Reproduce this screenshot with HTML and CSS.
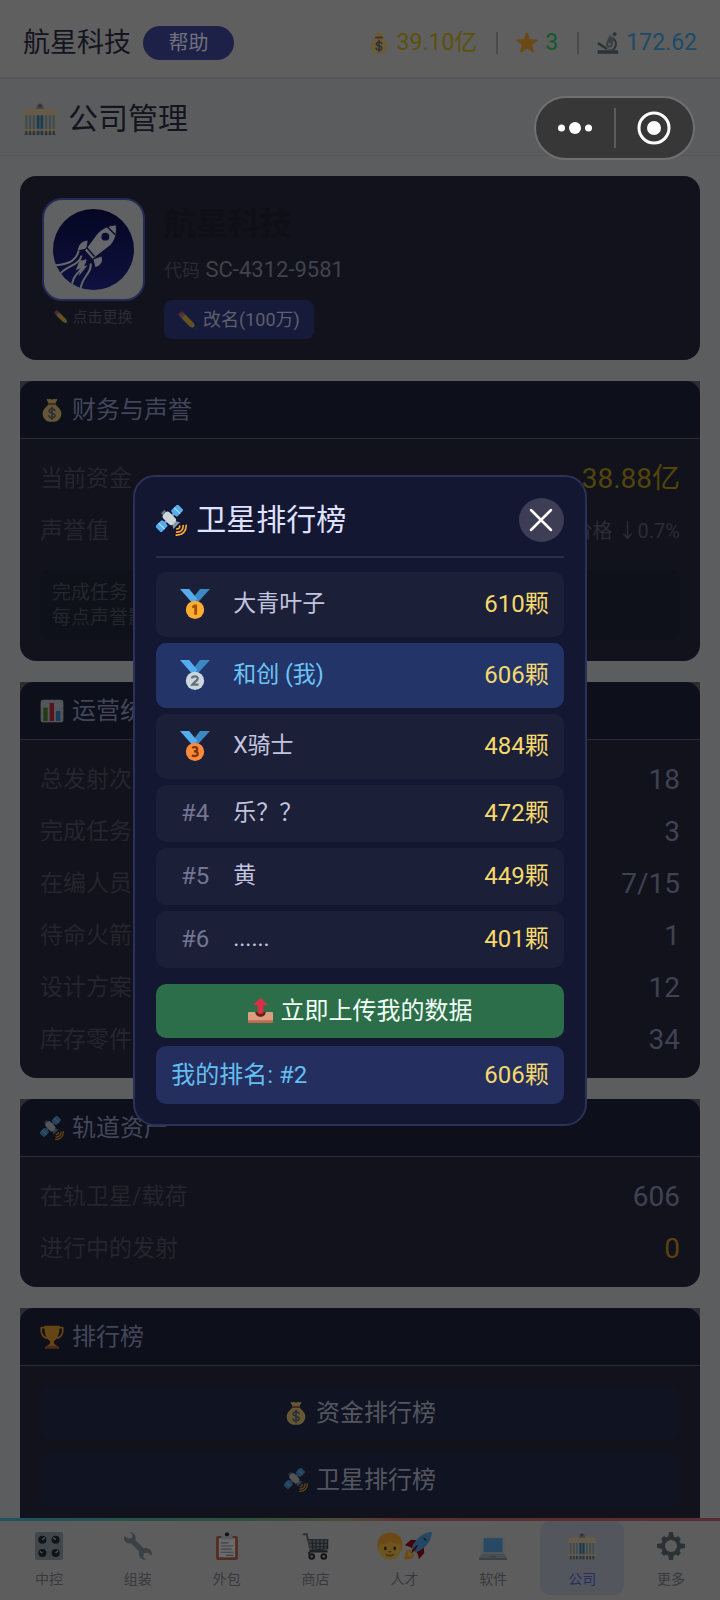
FILE: index.html
```html
<!DOCTYPE html>
<html lang="zh-CN">
<head>
<meta charset="utf-8">
<meta name="viewport" content="width=device-width, initial-scale=1">
<title>公司管理</title>
<link rel="stylesheet" href="styles.css">
</head>
<body>
<svg class="sprite" aria-hidden="true">
  <symbol id="i-money" viewBox="0 0 36 36">
    <path fill="#fdd888" d="M31.9 21.500c-.8-4.300-5-8.400-8.400-11.500H12.500C9 13.200 4.900 17.300 4.100 21.500c-.9 5 1.400 9 4.200 11.500 1.800 1.800 3.800 2.500 6.200 2.500h7c2.400 0 4.400-.7 6.200-2.500 2.800-2.500 5.100-6.500 4.200-11.500z"/>
    <path fill="#fdd888" d="M11 1.500c2 .8 3.500-.6 5 .2 1.200.7 2.800.7 4 0 1.500-.8 3 .6 5-.2 1-.3 1.300.6.800 1.500L23 8H13l-2.800-5c-.5-.9-.2-1.800.8-1.500z"/>
    <rect x="11.500" y="7.500" width="13" height="3" rx="1.500" fill="#bf6952"/>
    <path fill="none" stroke="#67757f" stroke-width="2.400" stroke-linecap="round" d="M22.300 18.800c-.5-1.700-2.200-2.500-4.300-2.500-2.400 0-4.300 1.200-4.300 3.200 0 4.600 8.800 2.200 8.800 6.700 0 2.200-2 3.400-4.500 3.400-2.300 0-4.200-1-4.600-2.900M18 13.800v18"/>
  </symbol>
  <symbol id="i-star" viewBox="0 0 36 36">
    <path fill="#ffac33" d="M18 .8c.8 0 1.300.6 1.600 1.400l3.500 9.600 10.600.4c1.700.1 2 1.600.8 2.600l-8.300 6.500 3 10.300c.4 1.500-.9 2.400-2.200 1.500L18 27l-9 6.100c-1.300.9-2.600 0-2.200-1.500l3-10.300-8.300-6.500c-1.200-1-.9-2.500.8-2.600l10.600-.4 3.500-9.600c.3-.8.800-1.400 1.600-1.400z"/>
  </symbol>
  <symbol id="i-scope" viewBox="0 0 36 36">
    <path fill="none" stroke="#66757f" stroke-width="3" d="M27 11c6 5 5.500 15-3 19.500"/>
    <path fill="#66757f" d="M2.500 16.500l15 9.500-2 3.500-15-9.500z"/>
    <path fill="#8899a6" d="M20.500 5.500l9 4-7 14.500-8.500-4z"/>
    <path fill="#ccd6dd" d="M23 3l8 3.600-1.600 3.600-8-3.700z"/>
    <circle cx="29" cy="3.500" r="3" fill="#66757f"/>
    <circle cx="20.500" cy="20" r="5.500" fill="#8899a6"/>
    <circle cx="20.500" cy="20" r="2.400" fill="#ccd6dd"/>
    <path fill="#66757f" d="M1 30h32c1 0 2 2 2 5.500H1z"/>
    <path fill="#8899a6" d="M18 28h9v3h-9z"/>
  </symbol>
  <symbol id="i-hall" viewBox="0 0 36 36">
    <rect x="1" y="10" width="34" height="25" fill="#8fb7d1"/>
    <path fill="#f3d7ab" d="M3.500 7H12l2.500-2h7L24 7h8.500c1.500 0 3.500 2.500 3.500 4.500V14H0v-2.500C0 9.500 2 7 3.500 7z"/>
    <path fill="#99aab5" d="M14 7.500c0-3.500 1.800-6 4-6s4 2.500 4 6z"/>
    <circle cx="18" cy="4" r="1.700" fill="#66757f"/>
    <path stroke="#f3d7ab" stroke-width="1.500" d="M1.500 14v20M5.500 14v20M9.500 14v20M13.500 14v20M22.500 14v20M26.500 14v20M30.500 14v20M34.500 14v20"/>
    <path fill="#3b88c3" d="M15 14h2v14h-2zM19 14h2v14h-2z"/>
    <path stroke="#66757f" stroke-width="2" d="M3.500 31v4M7.500 31v4M11.500 31v4M16 31v4M20 31v4M24.500 31v4M28.500 31v4M32.500 31v4"/>
    <path fill="#f3d7ab" d="M0 28.500h36v2H0z"/>
  </symbol>
  <symbol id="i-pencil" viewBox="0 0 36 36">
    <path fill="#ea596e" d="M1.500 5.500l4-4c1-1 2.500-1 3.500 0l2 2-7.500 7.500-2-2c-1-1-1-2.500 0-3.500z"/>
    <path fill="#99aab5" d="M11 3.500l3.500 3.500L7 14.500 3.500 11z"/>
    <path fill="#ffcc4d" d="M14.500 7l17 17-7.500 7.500-17-17z"/>
    <path fill="#f3d2a2" d="M31.500 24l3.500 10.500c0 .4-.2.600-.6.500L24 31.500z"/>
    <path fill="#292f33" d="M33.500 30l1.600 4.600c0 .4-.2.500-.6.400L30 33.500z"/>
  </symbol>
  <symbol id="i-sat" viewBox="0 0 36 36">
    <g transform="rotate(-45 15.500 15.500)">
      <path fill="#66757f" d="M12.500 4.500h6l-1 5h-4z"/>
      <path fill="#8899a6" d="M13.500 22h4l3.500 5.500H10z"/>
      <path fill="#8899a6" d="M8 14h3v3H8zM20 14h3v3h-3z"/>
      <rect x="10.500" y="7.500" width="10" height="16" rx="3.500" fill="#ccd6dd"/>
      <rect x="-3" y="10.500" width="11.500" height="10" rx="2" fill="#55acee"/>
      <rect x="22.500" y="10.500" width="11.500" height="10" rx="2" fill="#55acee"/>
      <path stroke="#bbddf5" stroke-width="1.200" d="M2.700 10.500v10M28.300 10.500v10"/>
    </g>
    <path fill="none" stroke="#ffac33" stroke-width="1.900" stroke-linecap="round" d="M27.500 24.500c.2 2-1.200 3.500-3.300 3.300M31.500 24c.3 4.700-2.800 7.800-7.500 7.500M35 23.500c.4 7-4.500 11.800-11.500 11.500"/>
  </symbol>
  <symbol id="i-chart" viewBox="0 0 36 36">
    <rect x="1" y="1" width="34" height="34" rx="4" fill="#ccd6dd"/>
    <path stroke="#e1e8ed" d="M1 9.500h34M1 18h34M1 26.500h34M9.500 1v34M18 1v34M26.500 1v34"/>
    <rect x="5" y="13" width="6.500" height="20" fill="#5c913b"/>
    <rect x="14.500" y="6" width="6.500" height="27" fill="#dd2e44"/>
    <rect x="24" y="18" width="6.500" height="15" fill="#3b94d9"/>
  </symbol>
  <symbol id="i-cup" viewBox="0 0 36 36">
    <path fill="none" stroke="#ffac33" stroke-width="2.600" d="M9 4H2c-.8 7.500 2 14 8.500 16M27 4h7c.8 7.500-2 14-8.500 16"/>
    <path fill="#ffac33" d="M6.500 1h23v1.800c0 10.200-3.300 18.700-8.500 21.200v2.500c0 2 3 3.500 4.500 5h-15c1.500-1.500 4.500-3 4.500-5V24C9.800 21.500 6.500 13 6.500 2.800z"/>
    <path fill="#c1694f" d="M7 35.500C7 33 9 31 11 31h14c2 0 4 2 4 4.500z"/>
  </symbol>
  <symbol id="i-ribbon" viewBox="0 0 36 36">
    <path fill="#3b88c3" d="M24 0h12L20.500 17l-7-3.500z"/>
    <path fill="#55acee" d="M0 0h11l10 12-6 5z"/>
  </symbol>
  <symbol id="i-gold" viewBox="0 0 36 36">
    <use href="#i-ribbon" width="36" height="36"/>
    <circle cx="18" cy="25" r="11" fill="#ffac33"/>
    <path fill="#9e5200" d="M16.800 18.500h3.700V31h-3.400v-8.600l-2.500.8v-2.900z"/>
  </symbol>
  <symbol id="i-silver" viewBox="0 0 36 36">
    <use href="#i-ribbon" width="36" height="36"/>
    <circle cx="18" cy="25" r="11" fill="#ccd6dd"/>
    <path fill="none" stroke="#627077" stroke-width="2.700" d="M14.300 22c.3-3.200 7.200-3.400 7 .3-.1 2.400-4.500 4.300-6.500 7.200h7.500"/>
  </symbol>
  <symbol id="i-bronze" viewBox="0 0 36 36">
    <use href="#i-ribbon" width="36" height="36"/>
    <circle cx="18" cy="25" r="11" fill="#ff8a3b"/>
    <path fill="none" stroke="#7c3700" stroke-width="2.700" d="M14.500 20.300c2.300-1.500 6.200-1.300 6.200 1.500 0 1.800-1.500 2.700-4 2.700 2.800 0 4.600.8 4.600 2.800 0 3-4.700 3.400-7 1.800"/>
  </symbol>
  <symbol id="i-outbox" viewBox="0 0 36 36">
    <path fill="#d99e82" d="M1 20h34c.6 0 1 .4 1 1v12c0 1.700-1.300 3-3 3H3c-1.700 0-3-1.300-3-3V21c0-.6.4-1 1-1z"/>
    <path fill="#c1694f" d="M0 32h36v1c0 1.700-1.300 3-3 3H3c-1.700 0-3-1.300-3-3z"/>
    <path fill="#662113" d="M10.500 20h15c0 4-3.300 7-7.500 7s-7.500-3-7.500-7z"/>
    <path fill="#dd2e44" d="M14 22V10.500H9.500c-1 0-1.400-1-.7-1.800l8.200-8c.6-.6 1.400-.6 2 0l8.200 8c.7.800.3 1.800-.7 1.800H22V22c-2 1-6 1-8 0z"/>
  </symbol>
  <symbol id="i-knobs" viewBox="0 0 36 36">
    <rect width="36" height="36" rx="2.500" fill="#99aab5"/>
    <g fill="#292f33"><circle cx="9.500" cy="10" r="5.200"/><circle cx="26.500" cy="10" r="5.200"/><circle cx="9.500" cy="27" r="5.200"/><circle cx="26.500" cy="27" r="5.200"/></g>
    <path stroke="#ccd6dd" stroke-width="1.600" d="M9.500 10l3-3M26.500 10l-3-3M9.500 27l-3-2M26.500 27l3-3"/>
  </symbol>
  <symbol id="i-wrench" viewBox="0 0 36 36">
    <path fill="#8899a6" d="M7.500.5C11 0 15 3 15 7.500c0 1.200-.2 2-.5 2.800L25 21c4.500-1.800 10.800 1.200 11 7l-.6 2.200-5.600-3.700-4.300 1.200-.9 4.300 3.700 3.600c-5.300 1-10.500-3.700-8.800-10.600L9 14.500C4.200 16 0 12.500 0 7.500L.6 5.200l5.600 3.600 4-1.300.9-4z"/>
  </symbol>
  <symbol id="i-clip" viewBox="0 0 36 36">
    <rect x="4" y="5" width="28" height="31" rx="2.500" fill="#c1694f"/>
    <path fill="#fff" d="M7.500 8h21v24.500h-21z"/>
    <path fill="#ccd6dd" d="M14 4h8c3 0 3.500 2 3.500 5.500h-15C10.500 6 11 4 14 4z"/>
    <circle cx="18" cy="3" r="2.700" fill="#292f33"/>
    <path stroke="#8899a6" stroke-width="1.500" d="M10 14h10M10 18h16M10 22h14M10 26h16M17 30h9"/>
  </symbol>
  <symbol id="i-cart" viewBox="0 0 36 36">
    <path fill="none" stroke="#66757f" stroke-width="2.500" stroke-linecap="round" d="M2 3h4l5 21.500h20"/>
    <path fill="#8899a6" d="M7.500 9.500H33v12l-23 2z"/>
    <path stroke="#414c54" stroke-width="1.500" fill="none" d="M7.500 10H34M9 14.500h24M10 19h23M13 10l1 13M18 10v13M23 10v13M28 10v12M33 10v11.500l-22 2"/>
    <path fill="none" stroke="#414c54" stroke-width="2.500" d="M8 28l3-3h22"/>
    <g fill="#ccd6dd" stroke="#292f33" stroke-width="2.500"><circle cx="12.500" cy="31.500" r="3"/><circle cx="28" cy="31.500" r="3"/></g>
  </symbol>
  <symbol id="i-face" viewBox="0 0 36 36">
    <path fill="#ffac33" d="M3 24C-1 9 7 1 18 1s19 8 15 23z"/>
    <circle cx="18" cy="21" r="14.500" fill="#ffcc4d"/>
    <path fill="#ffac33" d="M3 21C1 9 8 1 18 1s17 8 15 20c-1-3-2-5-3-7-5 2-9 0-12-3-2 4-7 5-12 4-1.500 1.500-2 3-3 6z"/>
    <path stroke="#662113" stroke-width="3" stroke-linecap="round" d="M12 20v2M24 20v2"/>
    <path fill="none" stroke="#c1694f" stroke-width="2" stroke-linecap="round" d="M13.500 29c3 1.800 6 1.800 9 0M17 25.500h2"/>
  </symbol>
  <symbol id="i-rocket" viewBox="0 0 36 36">
    <path fill="#a0041e" d="M1 17l8-7 16 1 1 16-7 8s.5-6-4.500-11S1 17 1 17z"/>
    <path fill="#ffac33" d="M.5 35.500s0-9 3.500-12 10 2.500 8.500 8c-1 3.500-12 4-12 4z"/>
    <circle cx="8" cy="28" r="3.600" fill="#ffcc4d"/>
    <path fill="#55acee" d="M36 0s-10 0-18 8c-5 5-8 11-8 13s3 5 5 5 8-3 13-8c8-8 8-18 8-18z"/>
    <path fill="#292f33" d="M24 7.500a4.500 4.500 0 0 1 5 5z"/>
    <path fill="#a0041e" d="M9 27c2-5 5-9 9-11-1 5-5 9-9 11z"/>
  </symbol>
  <symbol id="i-laptop" viewBox="0 0 36 36">
    <path fill="#ccd6dd" d="M5 6h26c.8 0 1.500.7 1.500 1.500L34 29H2L3.500 7.500C3.500 6.700 4.200 6 5 6z"/>
    <path fill="#5dadec" d="M6 8h24v18H6z"/>
    <path fill="#aebbc1" d="M4 28h28l4 5v2c0 .6-.4 1-1 1H1c-.6 0-1-.4-1-1v-2z"/>
    <path fill="#8899a6" d="M0 33.500h36V36H0zM14 31h8v1.500h-8z"/>
  </symbol>
  <symbol id="i-gear" viewBox="0 0 36 36">
    <g fill="#66757f">
      <path d="M15.500 0h5l1.500 8h-8zM15.500 36h5l1.500-8h-8zM0 15.500v5l8 1.500v-8zM36 15.500v5l-8 1.500v-8z"/>
      <path d="M5.300 9l3.700-3.700 6.500 4.700-5.500 5.500zM30.700 9L27 5.300 20.500 10l5.500 5.500zM5.300 27L9 30.700l6.500-4.700-5.500-5.500zM30.700 27L27 30.700 20.500 26l5.500-5.500z"/>
    </g>
    <circle cx="18" cy="18" r="10.200" fill="#5d5d5d" stroke="#66757f" stroke-width="5"/>
    <circle cx="18" cy="18" r="7.700" fill="#dedede"/>
  </symbol>
</svg>

<div class="app">
  <header class="topbar">
    <span class="brand">航星科技</span>
    <button class="help" type="button">帮助</button>
    <div class="stats">
      <span class="stat gold"><svg class="icon dim"><use href="#i-money"/></svg>39.10亿</span>
      <span class="stat green"><svg class="icon dim"><use href="#i-star"/></svg>3</span>
      <span class="stat blue"><svg class="icon dim"><use href="#i-scope"/></svg>172.62</span>
    </div>
  </header>
  <div class="titlebar">
    <svg class="icon dim"><use href="#i-hall"/></svg>
    <h1>公司管理</h1>
  </div>

  <main class="content">
    <section class="profile">
      <div class="avatar-col">
        <div class="avatar">
          <svg viewBox="0 0 82 82" aria-label="火箭标志">
            <defs>
              <linearGradient id="navy" x1="0" y1="0" x2="0" y2="1"><stop offset="0" stop-color="#040622"/><stop offset="1" stop-color="#0f1140"/></linearGradient>
              <clipPath id="disc"><circle cx="41" cy="41" r="41"/></clipPath>
            </defs>
            <circle cx="41" cy="41" r="41" fill="url(#navy)"/>
            <g clip-path="url(#disc)">
              <path fill="none" stroke="#66676a" stroke-width="2" d="M26 42c-2 9-8 14-24 15M29 47C26 58 13 57 6 67M33 51C31 64 19 64 19 80M38 55c2 10-10 14-10 27"/>
              <path fill="#66676a" d="M27 52l-4 10 5-2-2 8 9-11-4 1 3-6z"/>
              <path fill="#66676a" d="M35 32c-7 1-9 5-10 10l9-2zM49 48c2 6-1 9-6 11l-2-8z"/>
              <path fill="#66676a" stroke="#0a0c32" d="M64 16c-9 1-15 4-20 10L32 42l8 9 18-14c5-5 7-12 6-21z"/>
              <path fill="none" stroke="#0a0c32" stroke-width="1.500" d="M55 18l8 8M34 39l8 9"/>
              <circle cx="53" cy="28" r="4" fill="#0a0c32"/>
            </g>
          </svg>
        </div>
        <div class="avatar-hint"><svg class="icon"><use href="#i-pencil"/></svg>点击更换</div>
      </div>
      <div class="profile-info">
        <h2 class="company">航星科技</h2>
        <p class="code"><span>代码</span> SC-4312-9581</p>
        <button class="rename" type="button"><svg class="icon"><use href="#i-pencil"/></svg>改名(100万)</button>
      </div>
    </section>

    <section class="card">
      <h2 class="card-head"><svg class="icon"><use href="#i-money"/></svg>财务与声誉</h2>
      <div class="card-body">
        <div class="row"><span>当前资金</span><b class="cash">38.88亿</b></div>
        <div class="row"><span>声誉值</span><small>价格 ↓0.7%</small></div>
        <p class="tip">完成任务<br>每点声誉影响</p>
      </div>
    </section>

    <section class="card">
      <h2 class="card-head"><svg class="icon"><use href="#i-chart"/></svg>运营统计</h2>
      <div class="card-body">
        <div class="row"><span>总发射次数</span><b>18</b></div>
        <div class="row"><span>完成任务</span><b>3</b></div>
        <div class="row"><span>在编人员</span><b>7/15</b></div>
        <div class="row"><span>待命火箭</span><b>1</b></div>
        <div class="row"><span>设计方案</span><b>12</b></div>
        <div class="row"><span>库存零件</span><b>34</b></div>
      </div>
    </section>

    <section class="card">
      <h2 class="card-head"><svg class="icon"><use href="#i-sat"/></svg>轨道资产</h2>
      <div class="card-body">
        <div class="row"><span>在轨卫星/载荷</span><b>606</b></div>
        <div class="row"><span>进行中的发射</span><b class="warn">0</b></div>
      </div>
    </section>

    <section class="card">
      <h2 class="card-head"><svg class="icon"><use href="#i-cup"/></svg>排行榜</h2>
      <div class="card-body links">
        <button type="button"><svg class="icon"><use href="#i-money"/></svg>资金排行榜</button>
        <button type="button"><svg class="icon"><use href="#i-sat"/></svg>卫星排行榜</button>
      </div>
    </section>
  </main>

  <nav class="tabs">
    <button type="button"><span><svg class="icon dim"><use href="#i-knobs"/></svg></span>中控</button>
    <button type="button"><span><svg class="icon dim"><use href="#i-wrench"/></svg></span>组装</button>
    <button type="button"><span><svg class="icon dim"><use href="#i-clip"/></svg></span>外包</button>
    <button type="button"><span><svg class="icon dim"><use href="#i-cart"/></svg></span>商店</button>
    <button type="button"><span><svg class="icon dim"><use href="#i-face"/></svg><svg class="icon dim"><use href="#i-rocket"/></svg></span>人才</button>
    <button type="button"><span><svg class="icon dim"><use href="#i-laptop"/></svg></span>软件</button>
    <button type="button" class="active"><span><svg class="icon dim"><use href="#i-hall"/></svg></span>公司</button>
    <button type="button"><span><svg class="icon dim"><use href="#i-gear"/></svg></span>更多</button>
  </nav>
</div>

<div class="overlay">
  <div class="modal" role="dialog" aria-labelledby="rank-title">
    <div class="modal-head">
      <svg class="icon"><use href="#i-sat"/></svg>
      <h2 id="rank-title">卫星排行榜</h2>
      <button class="close" type="button" aria-label="关闭"><svg viewBox="0 0 24 24"><path d="M2 2l20 20M22 2L2 22"/></svg></button>
    </div>
    <ol class="ranks">
      <li class="top"><span class="pos"><svg class="icon"><use href="#i-gold"/></svg></span><span class="who">大青叶子</span><span class="num">610颗</span></li>
      <li class="top me"><span class="pos"><svg class="icon"><use href="#i-silver"/></svg></span><span class="who">和创 (我)</span><span class="num">606颗</span></li>
      <li class="top"><span class="pos"><svg class="icon"><use href="#i-bronze"/></svg></span><span class="who">X骑士</span><span class="num">484颗</span></li>
      <li><span class="pos">#4</span><span class="who">乐？？</span><span class="num">472颗</span></li>
      <li><span class="pos">#5</span><span class="who">黄</span><span class="num">449颗</span></li>
      <li><span class="pos">#6</span><span class="who">......</span><span class="num">401颗</span></li>
    </ol>
    <button class="upload" type="button"><svg class="icon"><use href="#i-outbox"/></svg>立即上传我的数据</button>
    <div class="mine"><span>我的排名: #2</span><span class="num">606颗</span></div>
  </div>
</div>

<div class="capsule">
  <button type="button" aria-label="更多"><svg viewBox="0 0 34 12" width="34" height="12"><circle cx="3.500" cy="6" r="3.500"/><circle cx="17" cy="6" r="6"/><circle cx="30.500" cy="6" r="3.500"/></svg></button>
  <button type="button" aria-label="退出"><svg viewBox="0 0 34 34" width="34" height="34"><circle class="ring" cx="17" cy="17" r="15"/><circle cx="17" cy="17" r="7"/></svg></button>
</div>
</body>
</html>
```

FILE: styles.css
```css
* { box-sizing: border-box; }

body {
  margin: 0;
  background: #5b5d5f;
  color: #14141f;
  font-family: Roboto, "Noto Sans CJK SC", sans-serif;
  font-weight: 400;
  line-height: 30px;
}

h1, h2, p, ol { margin: 0; padding: 0; font-weight: 400; }

button {
  border: 0;
  padding: 0;
  background: none;
  color: inherit;
  font: inherit;
}

.sprite { position: absolute; width: 0; height: 0; }
.icon { display: block; flex: none; width: 24px; height: 24px; overflow: visible; }
.dim { filter: brightness(0.42); }

.app { display: flex; flex-direction: column; height: 100vh; }

/* top bar */
.topbar {
  display: flex;
  align-items: center;
  height: 79px;
  padding: 8px 23px 0;
  flex: none;
  background: #5f5f5f;
  border-bottom: 2px solid #555657;
}
.brand { font-size: 27px; line-height: 36px; }
.help {
  width: 91px;
  height: 34px;
  margin-left: 12px;
  border-radius: 17px;
  background: #1d2147;
  color: #71727c;
  font-size: 20px;
  line-height: 34px;
}
.stats { display: flex; align-items: center; margin-left: auto; font-size: 23px; line-height: 30px; }
.stat { display: flex; align-items: center; gap: 7px; }
.stat + .stat::before {
  content: "";
  width: 2px;
  height: 22px;
  margin: 0 11px 0 19px;
  background: #4a4a4b;
}
.stat .icon { width: 22px; height: 22px; }
.gold { color: #5d5108; }
.green { color: #135a2b; }
.blue { color: #1c4a68; }

/* page title */
.titlebar {
  display: flex;
  align-items: center;
  gap: 11px;
  height: 77px;
  padding: 4px 23px 0;
  flex: none;
  background: #5a5c5e;
  border-bottom: 1px solid #555759;
}
.titlebar .icon { width: 34px; height: 34px; }
.titlebar h1 { font-size: 30px; line-height: 40px; }

.content {
  display: flex;
  flex-direction: column;
  gap: 21px;
  flex: 1;
  min-height: 0;
  overflow: hidden;
  padding: 20px 20px 0;
}
.content > * { flex: none; }

/* company profile */
.profile {
  display: flex;
  gap: 19px;
  padding: 22px 22px 21px;
  border-radius: 16px;
  background: #12121c;
}
.profile .icon, .card .icon { filter: brightness(0.4); }
.avatar-col { width: 103px; }
.avatar {
  padding: 9px;
  border: 2px solid #232a55;
  border-radius: 20px;
  background: #606163;
}
.avatar svg { display: block; width: 100%; }
.avatar-hint {
  display: flex;
  align-items: center;
  justify-content: center;
  gap: 4px;
  margin-top: 6px;
  color: #2a2b37;
  font-size: 15px;
  line-height: 20px;
}
.avatar-hint .icon { width: 14px; height: 14px; }
.company { color: #0e0f17; font-size: 32px; font-weight: 700; line-height: 52px; }
.code { margin-top: 4px; color: #41424d; font-size: 22px; line-height: 32px; }
.code span { color: #292a34; font-size: 18px; }
.rename {
  display: flex;
  align-items: center;
  gap: 7px;
  height: 39px;
  margin-top: 13px;
  padding: 0 14px;
  border-radius: 8px;
  background: #161a3b;
  color: #5e606b;
  font-size: 18px;
}
.rename .icon { width: 18px; height: 18px; }

/* cards */
.card {
  border-radius: 0 0 16px 16px;
  background: linear-gradient(#2c2d33 0 20px, #12121c 20px);
}
.card-head {
  display: flex;
  align-items: center;
  gap: 8px;
  height: 58px;
  padding: 0 20px;
  border-bottom: 1px solid #2b2c38;
  border-radius: 14px 14px 0 0;
  background: #0d0f1a;
  color: #43465a;
  font-size: 24px;
}
.card-body { padding: 14px 20px 12px; }
.row {
  display: flex;
  align-items: center;
  justify-content: space-between;
  height: 52px;
  color: #24252e;
  font-size: 23px;
}
.row b { color: #3f4252; font-size: 28px; font-weight: 400; }
.row .cash { color: #514608; }
.row .warn { color: #5d4012; }
.row small { color: #2b2c36; font-size: 20px; }
.tip {
  margin: 13px 0 9px;
  padding: 10px 12px;
  border-radius: 8px;
  background: #0e1119;
  color: #24262e;
  font-size: 19px;
  line-height: 25px;
}
.links { display: flex; flex-direction: column; gap: 13px; padding: 20px 20px 30px; }
.links button {
  display: flex;
  align-items: center;
  justify-content: center;
  gap: 8px;
  height: 54px;
  border-radius: 8px;
  background: #101322;
  color: #54565f;
  font-size: 24px;
}

/* bottom tabs */
.tabs {
  display: grid;
  grid-template-columns: repeat(8, 1fr);
  gap: 5px;
  flex: none;
  height: 82px;
  padding: 0 7px 5px;
  border-top: 3px solid;
  border-image: linear-gradient(90deg, #21535f, #2c4f3d 33%, #4d4a3a 48%, #5a3036 56%, #5c2c34) 1;
  background: #5d5d5d;
  color: #38393d;
  font-size: 14px;
}
.tabs button {
  display: flex;
  flex-direction: column;
  align-items: center;
  gap: 9px;
  padding-top: 11px;
  border-radius: 10px;
  line-height: 20px;
}
.tabs span { display: flex; }
.tabs .icon { width: 28px; height: 28px; }
.tabs .active { background: #54565e; color: #272c5e; }

/* ranking dialog */
.overlay {
  position: fixed;
  inset: 0;
  display: flex;
  align-items: center;
  justify-content: center;
}
.modal {
  width: 63%;
  padding: 20px 21px;
  border: 2px solid #2b3159;
  border-radius: 22px;
  background: #141732;
}
.modal-head {
  display: flex;
  align-items: center;
  gap: 9px;
  height: 61px;
  padding-bottom: 12px;
  border-bottom: 2px solid #2b2e4b;
  color: #dfe2ff;
}
.modal-head .icon { width: 31px; height: 31px; }
.modal-head h2 { font-size: 30px; line-height: 40px; }
.close {
  display: flex;
  align-items: center;
  justify-content: center;
  width: 45px;
  height: 44px;
  margin-left: auto;
  border-radius: 50%;
  background: #3d3d55;
}
.close svg { width: 24px; height: 24px; fill: none; stroke: #fff; stroke-width: 2.500; stroke-linecap: round; }
.ranks { display: flex; flex-direction: column; gap: 6px; margin-top: 14px; list-style: none; }
.ranks li {
  display: flex;
  align-items: center;
  height: 57px;
  padding: 0 15px;
  border-radius: 10px;
  background: #1b1f38;
  color: #c3c4df;
}
.ranks .top { height: 65px; }
.ranks .me { background: #233468; color: #6cc4f5; }
.pos { display: flex; justify-content: center; width: 48px; margin-right: 14px; color: #737592; font-size: 24px; }
.pos .icon { width: 30px; height: 30px; }
.who { font-size: 23px; }
.num { margin-left: auto; color: #f5d96b; font-size: 24px; }
.upload {
  display: flex;
  align-items: center;
  justify-content: center;
  gap: 8px;
  width: 100%;
  height: 54px;
  margin-top: 16px;
  border-radius: 10px;
  background: #2d6e4a;
  color: #f2fff6;
  font-size: 24px;
}
.upload .icon { width: 25px; height: 25px; }
.mine {
  display: flex;
  align-items: center;
  height: 58px;
  margin-top: 8px;
  padding: 0 15px;
  border-radius: 10px;
  background: #242f60;
  color: #63bff0;
  font-size: 24px;
}

/* floating mini-program capsule */
.capsule {
  position: fixed;
  top: 96px;
  right: 25px;
  display: flex;
  align-items: center;
  width: 161px;
  height: 64px;
  border: 2px solid #707070;
  border-radius: 32px;
  background: #373737;
}
.capsule button { display: flex; flex: 1; align-items: center; justify-content: center; height: 40px; }
.capsule button + button { border-left: 2px solid #5c5c5c; }
.capsule svg { fill: #fff; }
.capsule .ring { fill: none; stroke: #fff; stroke-width: 3; }
```
